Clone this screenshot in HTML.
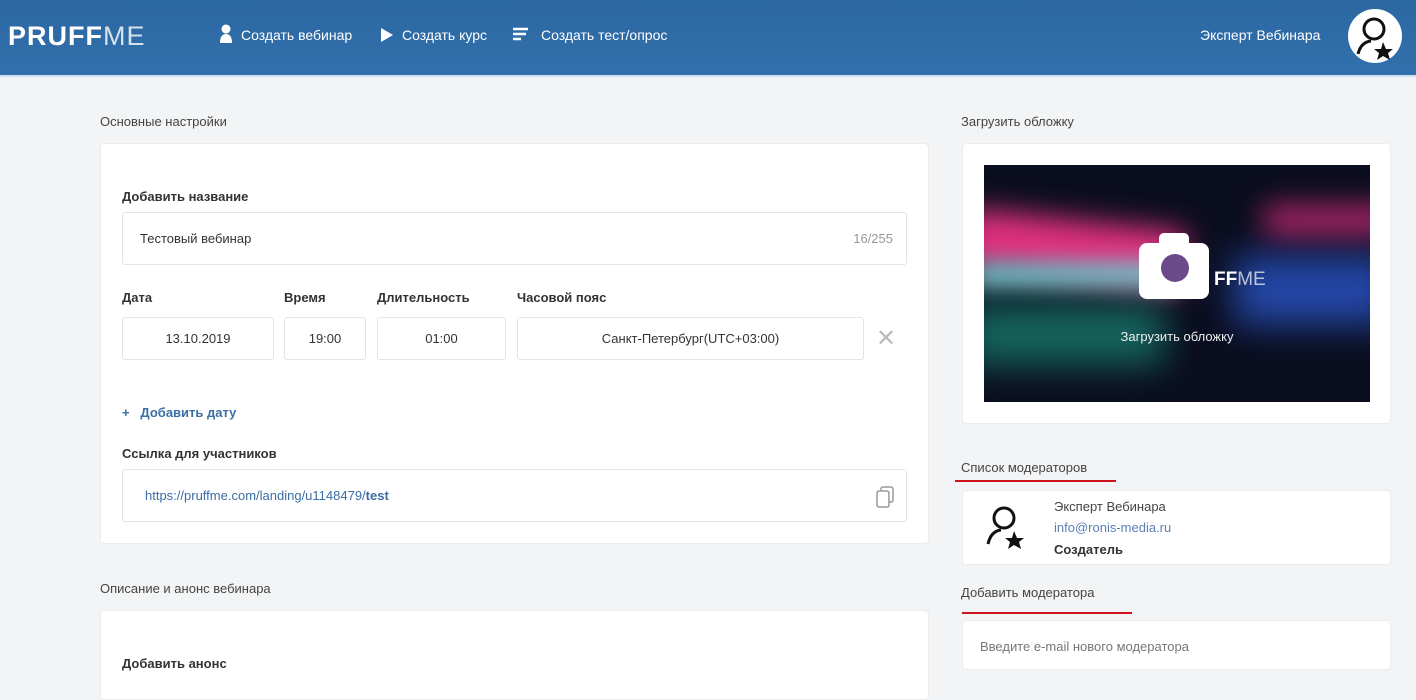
<!DOCTYPE html>
<html><head><meta charset="utf-8"><style>
*{box-sizing:border-box;margin:0;padding:0}
body{width:1416px;height:684px;overflow:hidden;background:#f3f4f5;font-family:"Liberation Sans","DejaVu Sans",sans-serif;color:#333;position:relative}
.hdr{position:absolute;left:0;top:0;width:1416px;height:77px;background:linear-gradient(#2c67a1,#3170ad);border-bottom:2px solid #cfe0ee}
.abs{position:absolute}
.w{color:#fff;font-size:14px}
.card{position:absolute;background:#fff;border:1px solid #ececec;border-radius:4px}
.lbl{position:absolute;font-size:13px;color:#444}
.b{position:absolute;font-size:13px;font-weight:bold;color:#333}
.inp{position:absolute;border:1px solid #e4e4e4;border-radius:3px;background:#fff;font-size:13px;color:#333;display:flex;align-items:center;justify-content:center}
.red{position:absolute;height:2px;background:#d0141b}
</style></head><body>
<div class="hdr"></div>
<div class="abs w" style="left:8px;top:21px;font-size:27px;letter-spacing:1px"><b>PRUFF</b><span style="font-weight:300;opacity:.8">ME</span></div>
<svg class="abs" style="left:219px;top:24px" width="14" height="20"><circle cx="7" cy="5" r="4.5" fill="#fff"/><path d="M1 19 Q1 10 7 10 Q13 10 13 19Z" fill="#fff"/></svg>
<div class="abs w" style="left:241px;top:27px">Создать вебинар</div>
<svg class="abs" style="left:380px;top:27px" width="14" height="16"><path d="M1 1 L13 8 L1 15Z" fill="#fff"/></svg>
<div class="abs w" style="left:402px;top:27px">Создать курс</div>
<svg class="abs" style="left:513px;top:27px" width="16" height="16"><path d="M0 2h15M0 7h13M0 12h8" stroke="#fff" stroke-width="2.5"/></svg>
<div class="abs w" style="left:541px;top:27px">Создать тест/опрос</div>
<div class="abs w" style="left:1200px;top:27px;font-size:14px">Эксперт Вебинара</div>
<svg class="abs" style="left:1347px;top:8px" width="56" height="56"><circle cx="28" cy="28" r="27" fill="#fff"/><circle cx="27" cy="21" r="10" fill="none" stroke="#111" stroke-width="3"/><path d="M11 46 Q14 34 24 33" fill="none" stroke="#111" stroke-width="3"/><path d="M36 34 l3 7 7 0 -5 4 2 7 -7 -4 -6 4 2 -7 -5 -4 7 0z" fill="#111"/></svg>

<div class="lbl" style="left:100px;top:114px">Основные настройки</div>
<div class="card" style="left:100px;top:143px;width:829px;height:401px"></div>
<div class="b" style="left:122px;top:189px">Добавить название</div>
<div class="inp" style="left:122px;top:212px;width:785px;height:53px;justify-content:flex-start;padding-left:17px">Тестовый вебинар<span style="position:absolute;right:13px;color:#999">16/255</span></div>
<div class="b" style="left:122px;top:290px">Дата</div>
<div class="b" style="left:284px;top:290px">Время</div>
<div class="b" style="left:377px;top:290px">Длительность</div>
<div class="b" style="left:517px;top:290px">Часовой пояс</div>
<div class="inp" style="left:122px;top:317px;width:152px;height:43px">13.10.2019</div>
<div class="inp" style="left:284px;top:317px;width:82px;height:43px">19:00</div>
<div class="inp" style="left:377px;top:317px;width:129px;height:43px">01:00</div>
<div class="inp" style="left:517px;top:317px;width:347px;height:43px">Санкт-Петербург(UTC+03:00)</div>
<div class="abs" style="left:876px;top:324px;font-size:24px;color:#bbb">✕</div>
<div class="abs" style="left:122px;top:405px;font-size:13px;color:#3a6ea5;font-weight:bold">+&nbsp;&nbsp; Добавить дату</div>
<div class="b" style="left:122px;top:446px">Ссылка для участников</div>
<div class="inp" style="left:122px;top:469px;width:785px;height:53px;justify-content:flex-start;padding-left:22px;color:#3a6ea5">https://pruffme.com/landing/u1148479/<b>test</b>
<svg style="position:absolute;right:12px;top:16px" width="18" height="22"><rect x="5" y="1" width="12" height="15" rx="2" fill="none" stroke="#999" stroke-width="1.5"/><rect x="1" y="5" width="12" height="16" rx="2" fill="#fff" stroke="#999" stroke-width="1.5"/></svg></div>
<div class="lbl" style="left:100px;top:581px">Описание и анонс вебинара</div>
<div class="card" style="left:100px;top:610px;width:829px;height:90px"></div>
<div class="b" style="left:122px;top:656px">Добавить анонс</div>

<div class="lbl" style="left:961px;top:114px">Загрузить обложку</div>
<div class="card" style="left:962px;top:143px;width:429px;height:281px"></div>
<div class="abs" style="left:984px;top:165px;width:386px;height:237px;background:#0a0d1e;overflow:hidden">
<div class="abs" style="left:-20px;top:55px;width:220px;height:60px;background:#e0307f;filter:blur(14px);transform:rotate(6deg)"></div>
<div class="abs" style="left:-10px;top:95px;width:200px;height:30px;background:#6fd3d3;filter:blur(10px);opacity:.8"></div>
<div class="abs" style="left:-20px;top:140px;width:200px;height:60px;background:#1a8a7a;filter:blur(18px);opacity:.7"></div>
<div class="abs" style="left:250px;top:90px;width:160px;height:70px;background:#2a55c8;filter:blur(18px);opacity:.8"></div>
<div class="abs" style="left:280px;top:40px;width:130px;height:30px;background:#d02a7a;filter:blur(14px);opacity:.8"></div>
<div class="abs" style="left:155px;top:78px;width:70px;height:56px;background:#fff;border-radius:8px"></div>
<div class="abs" style="left:175px;top:68px;width:30px;height:14px;background:#fff;border-radius:5px"></div>
<div class="abs" style="left:177px;top:89px;width:28px;height:28px;border-radius:50%;background:#6a4a8a"></div>
<div class="abs" style="left:230px;top:104px;color:#fff;font-size:19px"><b>FF</b><span style="opacity:.7">ME</span></div>
<div class="abs" style="left:0;top:164px;width:386px;text-align:center;color:#eee;font-size:13px">Загрузить обложку</div>
</div>

<div class="lbl" style="left:961px;top:460px">Список модераторов</div>
<div class="red" style="left:955px;top:480px;width:161px"></div>
<div class="card" style="left:962px;top:490px;width:429px;height:75px"></div>
<svg class="abs" style="left:978px;top:498px" width="56" height="56"><circle cx="26" cy="20" r="10" fill="none" stroke="#111" stroke-width="3"/><path d="M10 46 Q13 33 23 32" fill="none" stroke="#111" stroke-width="3"/><path d="M36 33 l3 7 7 0 -5 4 2 7 -7 -4 -6 4 2 -7 -5 -4 7 0z" fill="#111"/></svg>
<div class="abs" style="left:1054px;top:499px;font-size:13px;color:#444">Эксперт Вебинара</div>
<div class="abs" style="left:1054px;top:520px;font-size:13px;color:#5a7fb5">info@ronis-media.ru</div>
<div class="b" style="left:1054px;top:542px">Создатель</div>
<div class="lbl" style="left:961px;top:585px">Добавить модератора</div>
<div class="red" style="left:962px;top:612px;width:170px"></div>
<div class="card" style="left:962px;top:620px;width:429px;height:50px;font-size:13px;color:#777;padding:18px 0 0 17px">Введите e-mail нового модератора</div>
</body></html>
